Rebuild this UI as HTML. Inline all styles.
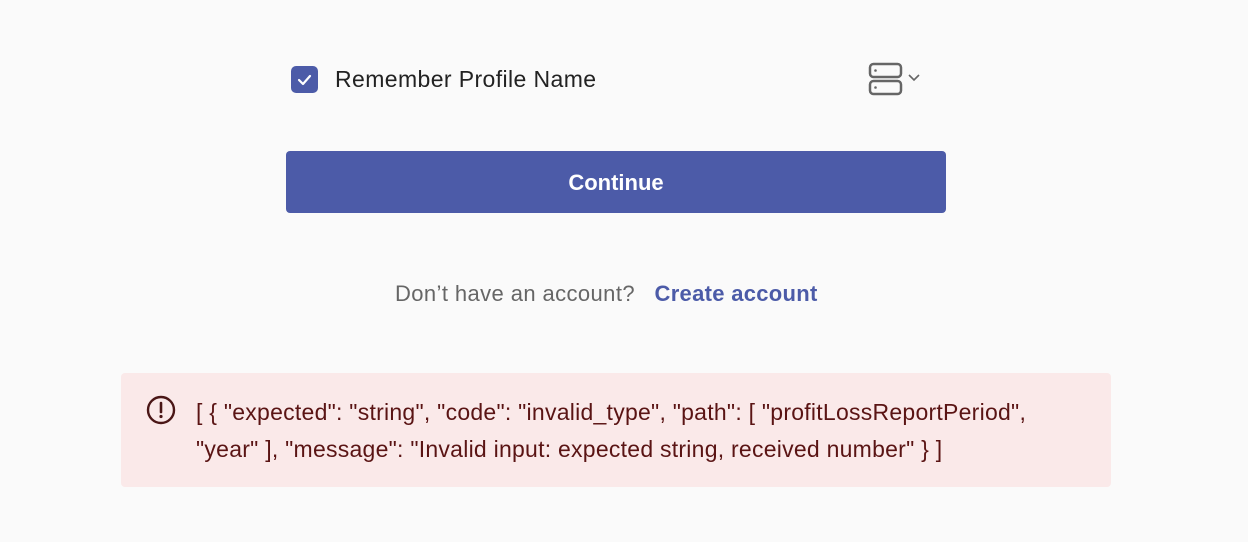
<!DOCTYPE html>
<html><head><style>
body{margin:0;width:1248px;height:542px;background:#fafafa;font-family:"Liberation Sans",sans-serif;position:relative;overflow:hidden}
.a{position:absolute}
</style></head><body>
<div class="a" style="left:291px;top:66px;width:27px;height:27px;background:#4c5ba8;border-radius:5px">
<svg width="27" height="27"><path d="M8 14l4 4 7-8" stroke="#fff" stroke-width="2.2" fill="none" stroke-linecap="round" stroke-linejoin="round"/></svg></div>
<div class="a" style="left:335px;top:65px;font-size:23px;color:#222;line-height:28px;letter-spacing:0.4px;white-space:nowrap">Remember Profile Name</div>
<svg class="a" style="left:866px;top:60px" width="60" height="40">
<rect x="4" y="4" width="31" height="13" rx="3.5" fill="none" stroke="#666" stroke-width="2.5"/>
<rect x="4" y="21" width="31" height="13" rx="3.5" fill="none" stroke="#666" stroke-width="2.5"/>
<circle cx="9.5" cy="10.5" r="1.3" fill="#666"/><circle cx="9.5" cy="27.5" r="1.3" fill="#666"/>
<path d="M43 15l5 5 5-5" stroke="#666" stroke-width="1.6" fill="none"/></svg>
<div class="a" style="left:286px;top:151px;width:660px;height:62px;background:#4c5ba8;border-radius:4px;color:#fff;font-size:22px;font-weight:bold;text-align:center;line-height:64px">Continue</div>
<div class="a" style="left:395px;top:280px;white-space:nowrap;font-size:22px;line-height:28px;color:#666;letter-spacing:0.4px">Don’t have an account?&nbsp;&nbsp; <span style="color:#4c5ba8;font-weight:bold;letter-spacing:0.3px">Create account</span></div>
<div class="a" style="left:121px;top:373px;width:990px;height:114px;background:#fae9e9;border-radius:4px"></div>
<svg class="a" style="left:146px;top:395px" width="30" height="30"><circle cx="15" cy="15" r="13" fill="none" stroke="#4a1616" stroke-width="2.4"/><path d="M15 8v9" stroke="#4a1616" stroke-width="2.6" stroke-linecap="round"/><circle cx="15" cy="21.5" r="1.6" fill="#4a1616"/></svg>
<div class="a" style="left:196px;top:394px;white-space:nowrap;font-size:23px;line-height:37px;color:#5a1414;letter-spacing:0.25px">[ { "expected": "string", "code": "invalid_type", "path": [ "profitLossReportPeriod",<br>"year" ], "message": "Invalid input: expected string, received number" } ]</div>
</body></html>
